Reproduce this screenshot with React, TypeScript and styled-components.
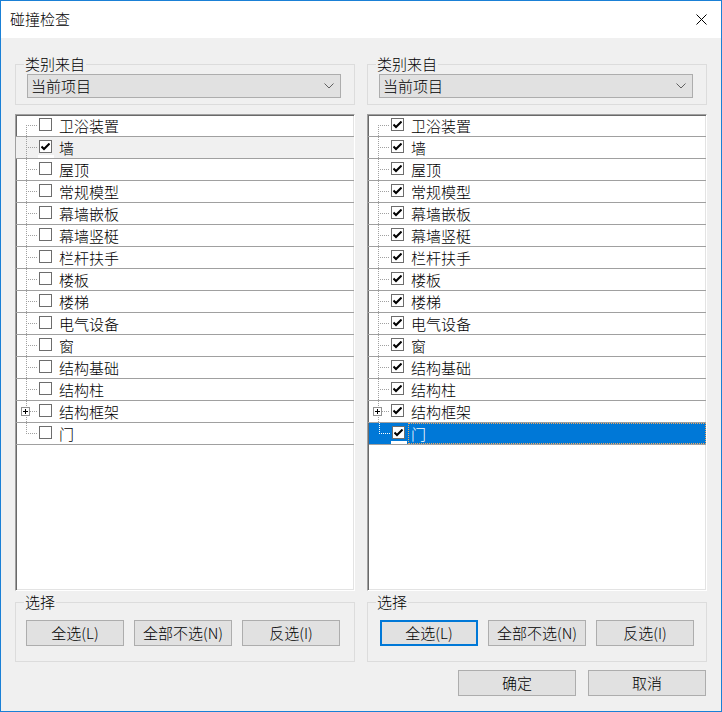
import React from 'react';
import styled, { createGlobalStyle, css } from 'styled-components';

const GlobalStyle = createGlobalStyle`
  html, body {
    margin: 0;
    padding: 0;
    background: #ffffff;
  }
  body {
    font-family: "Noto Sans CJK SC", "Noto Sans", sans-serif;
    font-size: 15px;
    font-weight: 300;
    color: #000;
  }
`;

const Window = styled.div`
  width: 722px;
  height: 712px;
  box-sizing: border-box;
  border: 1px solid #1a80d6;
  background: #f0f0f0;
  display: flex;
  flex-direction: column;
`;

const TitleBar = styled.div`
  height: 37px;
  background: #ffffff;
  display: flex;
  align-items: center;
  justify-content: space-between;
  padding: 0 14px 0 9px;
  flex-shrink: 0;
`;

const TitleText = styled.div`
  font-size: 15px;
  line-height: 20px;
  margin-top: -1px;
`;

const CloseButton = styled.div`
  width: 12px;
  height: 12px;
  display: flex;
  align-items: center;
  justify-content: center;
  margin-top: -1px;
`;

const Body = styled.div`
  flex: 1;
  display: flex;
  flex-direction: column;
  padding: 26px 14px 15px 14px;
`;

const Columns = styled.div`
  display: grid;
  grid-template-columns: 340px 340px;
  column-gap: 12px;
`;

const Column = styled.div`
  display: flex;
  flex-direction: column;
`;

const GroupBox = styled.div<{ $height: number }>`
  position: relative;
  height: ${({ $height }) => $height}px;
  box-sizing: border-box;
  border: 1px solid #dcdcdc;
`;

const GroupLegend = styled.span`
  position: absolute;
  top: -10px;
  left: 8px;
  padding: 0 1px;
  background: #f0f0f0;
  line-height: 18px;
  font-size: 15px;
`;

const ComboBox = styled.div`
  margin: 9px 13px 0 11px;
  height: 24px;
  box-sizing: border-box;
  border: 1px solid #adadad;
  background: #e1e1e1;
  display: flex;
  align-items: center;
  justify-content: space-between;
  padding: 0 6px 0 3px;
`;

const ComboText = styled.span`
  font-size: 15px;
  line-height: 20px;
`;

const TreeList = styled.div`
  margin-top: 9px;
  height: 477px;
  box-sizing: border-box;
  background: #ffffff;
  border-top: 1px solid #a0a0a0;
  border-left: 1px solid #a0a0a0;
  border-right: 1px solid #ffffff;
  border-bottom: 1px solid #ffffff;
  box-shadow: inset 1px 1px 0 #696969, inset -1px -1px 0 #e3e3e3;
  overflow: hidden;
`;

const TreeRow = styled.div<{ $state: 'none' | 'inactive' | 'active' }>`
  position: relative;
  height: 21px;
  border-bottom: 1px solid #a0a0a0;
  display: flex;
  align-items: stretch;
  ${({ $state }) =>
    $state === 'inactive' &&
    css`
      background: #f0f0f0;
    `}
  ${({ $state }) =>
    $state === 'active' &&
    css`
      background: #0078d7;
      margin-left: 1px;
      color: #ffffff;
    `}
`;

const TreeGuide = styled.div<{ $pos: 'first' | 'middle' | 'last'; $light: boolean }>`
  position: relative;
  width: 23px;
  flex-shrink: 0;
  --dot: ${({ $light }) => ($light ? '#ffffff' : '#a0a0a0')};

  &::before {
    content: '';
    position: absolute;
    left: 10px;
    width: 1px;
    top: ${({ $pos }) => ($pos === 'first' ? '10px' : '0')};
    bottom: ${({ $pos }) => ($pos === 'last' ? '10px' : '0')};
    background: repeating-linear-gradient(to bottom, var(--dot) 0 1px, transparent 1px 2px);
  }

  &::after {
    content: '';
    position: absolute;
    left: 10px;
    top: 10px;
    width: 12px;
    height: 1px;
    background: repeating-linear-gradient(to right, var(--dot) 0 1px, transparent 1px 2px);
  }
`;

const Expander = styled.div`
  position: absolute;
  left: 5px;
  top: 6px;
  width: 9px;
  height: 9px;
  box-sizing: border-box;
  border: 1px solid #919191;
  background: #ffffff;
  z-index: 1;

  &::before {
    content: '';
    position: absolute;
    left: 1px;
    top: 3px;
    width: 5px;
    height: 1px;
    background: #000;
  }
  &::after {
    content: '';
    position: absolute;
    left: 3px;
    top: 1px;
    width: 1px;
    height: 5px;
    background: #000;
  }
`;

const CheckBox = styled.div<{ $focusMark: boolean }>`
  position: relative;
  width: 13px;
  height: 13px;
  box-sizing: border-box;
  border: 1px solid #6d6d6d;
  background: #ffffff;
  align-self: center;
  margin-top: -2px;
  flex-shrink: 0;
  display: flex;
  align-items: center;
  justify-content: center;

  ${({ $focusMark }) =>
    $focusMark &&
    css`
      &::after {
        content: '';
        position: absolute;
        left: -2px;
        top: 14px;
        width: 16px;
        height: 3px;
        background: #ffffff;
      }
    `}
`;

const ItemLabel = styled.div<{ $focused: boolean }>`
  flex: 1;
  margin-left: 3px;
  padding-left: 4px;
  display: flex;
  align-items: center;
  font-size: 15px;
  line-height: 20px;
  ${({ $focused }) =>
    $focused &&
    css`
      outline: 1px dotted #f0a860;
      outline-offset: -1px;
      padding-left: 3px;
    `}
`;

const ButtonRow = styled.div<{ $inset: number }>`
  display: flex;
  gap: 10px;
  padding: 17px 0 0 ${({ $inset }) => $inset}px;
`;

const PushButton = styled.div<{ $width: number; $focused?: boolean }>`
  width: ${({ $width }) => $width}px;
  height: 26px;
  box-sizing: border-box;
  border: 1px solid #adadad;
  background: #e1e1e1;
  display: flex;
  align-items: center;
  justify-content: center;
  font-size: 15px;
  line-height: 20px;
  ${({ $focused }) =>
    $focused &&
    css`
      border: 2px solid #0078d7;
    `}
`;

const Footer = styled.div`
  display: flex;
  justify-content: flex-end;
  gap: 12px;
  margin-top: 8px;
  padding-right: 1px;
`;

const CheckMark = () => (
  <svg width="9" height="8" viewBox="0 0 9 8">
    <path d="M0.5 3.5 L3 6 L8.5 0.5" fill="none" stroke="#000" strokeWidth="2" />
  </svg>
);

const Chevron = () => (
  <svg width="10" height="6" viewBox="0 0 10 6">
    <path d="M0.5 0.5 L5 5 L9.5 0.5" fill="none" stroke="#606060" strokeWidth="1" />
  </svg>
);

const CloseIcon = () => (
  <svg width="11" height="11" viewBox="0 0 11 11">
    <path d="M0.5 0.5 L10.5 10.5 M10.5 0.5 L0.5 10.5" stroke="#000" strokeWidth="1" />
  </svg>
);

const categories = [
  '卫浴装置',
  '墙',
  '屋顶',
  '常规模型',
  '幕墙嵌板',
  '幕墙竖梃',
  '栏杆扶手',
  '楼板',
  '楼梯',
  '电气设备',
  '窗',
  '结构基础',
  '结构柱',
  '结构框架',
  '门',
];

type PanelProps = {
  checked: (index: number) => boolean;
  highlight: number;
  highlightActive: boolean;
  focusedButton?: boolean;
};

const CategoryPanel: React.FC<PanelProps> = ({ checked, highlight, highlightActive, focusedButton }) => (
  <Column>
    <GroupBox $height={41}>
      <GroupLegend>类别来自</GroupLegend>
      <ComboBox>
        <ComboText>当前项目</ComboText>
        <Chevron />
      </ComboBox>
    </GroupBox>

    <TreeList>
      {categories.map((name, i) => {
        const isHi = i === highlight;
        const state = isHi ? (highlightActive ? 'active' : 'inactive') : 'none';
        const pos = i === 0 ? 'first' : i === categories.length - 1 ? 'last' : 'middle';
        return (
          <TreeRow key={name} $state={state}>
            <TreeGuide $pos={pos} $light={state === 'active'}>
              {name === '结构框架' && <Expander />}
            </TreeGuide>
            <CheckBox $focusMark={isHi}>{checked(i) && <CheckMark />}</CheckBox>
            <ItemLabel $focused={state === 'active'}>{name}</ItemLabel>
          </TreeRow>
        );
      })}
    </TreeList>

    <GroupBox $height={60} style={{ marginTop: 11 }}>
      <GroupLegend>选择</GroupLegend>
      <ButtonRow $inset={focusedButton ? 12 : 10}>
        <PushButton $width={98} $focused={focusedButton}>全选(L)</PushButton>
        <PushButton $width={98}>全部不选(N)</PushButton>
        <PushButton $width={98}>反选(I)</PushButton>
      </ButtonRow>
    </GroupBox>
  </Column>
);

const App: React.FC = () => {
  return (
    <>
      <GlobalStyle />
      <Window>
        <TitleBar>
          <TitleText>碰撞检查</TitleText>
          <CloseButton>
            <CloseIcon />
          </CloseButton>
        </TitleBar>
        <Body>
          <Columns>
            <CategoryPanel checked={(i) => i === 1} highlight={1} highlightActive={false} />
            <CategoryPanel checked={() => true} highlight={14} highlightActive focusedButton />
          </Columns>
          <Footer>
            <PushButton $width={118}>确定</PushButton>
            <PushButton $width={118}>取消</PushButton>
          </Footer>
        </Body>
      </Window>
    </>
  );
};

export default App;
